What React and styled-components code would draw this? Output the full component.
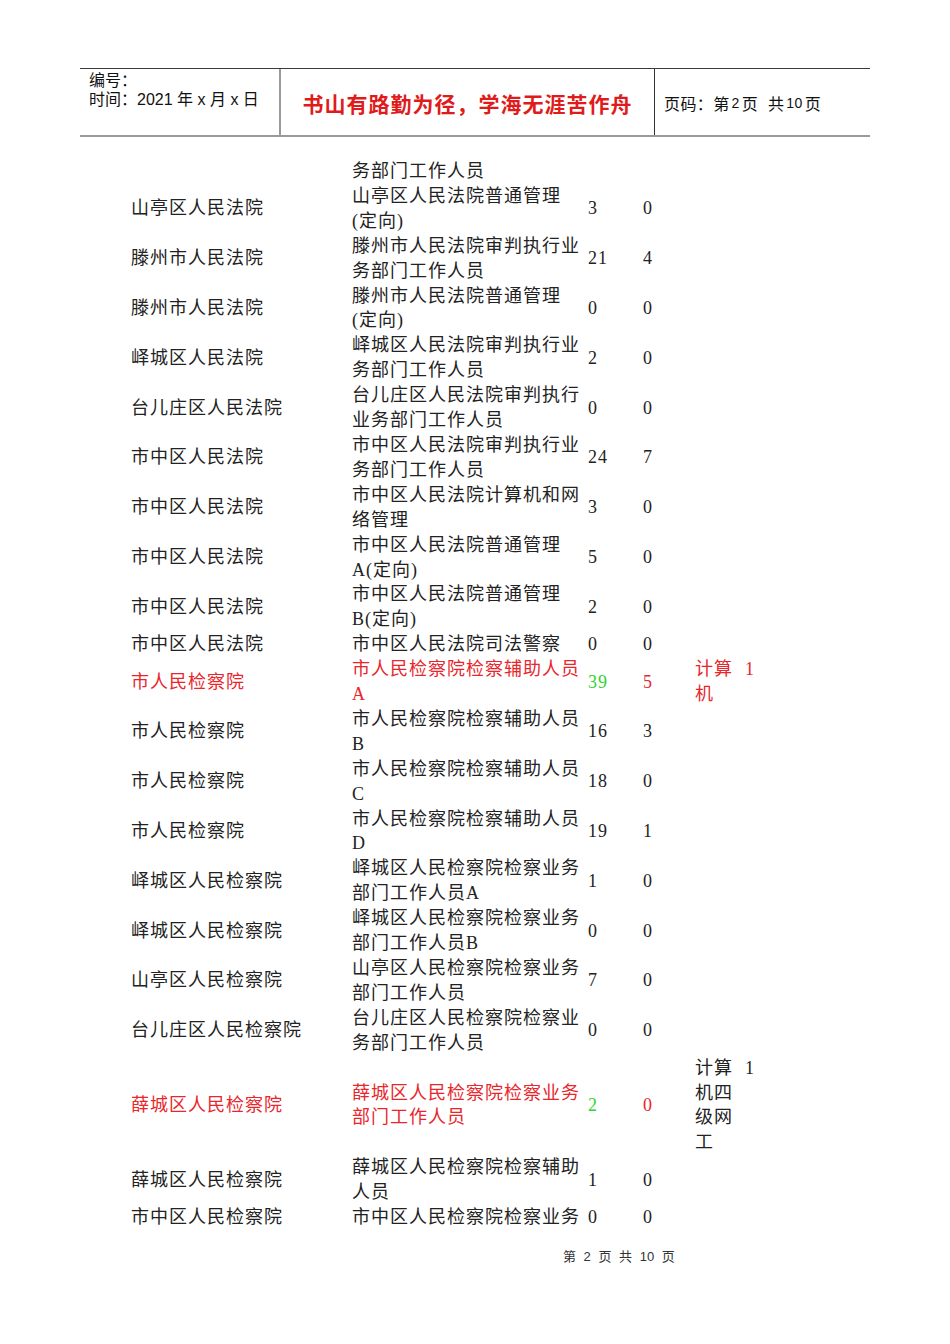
import React from "react";
import styled, { createGlobalStyle } from "styled-components";

const Global = createGlobalStyle`
  html, body { margin: 0; padding: 0; background: #fff; }
  body { width: 950px; min-height: 1344px; }
`;

const Page = styled.div`
  width: 790px;
  margin-left: 80px;
  padding-top: 68px;
  font-family: "Liberation Serif", "Noto Sans CJK SC", serif;
  color: #222;
`;

const Header = styled.div`
  display: grid;
  grid-template-columns: 201px 374px 1fr;
  height: 66px;
  border-top: 1px solid #3a3a3a;
  border-bottom: 2px solid #9a9a9a;
  font-family: "Liberation Sans", "Noto Sans CJK SC", sans-serif;
`;

const MetaCell = styled.div`
  padding: 2px 9px 0;
  font-size: 16px;
  line-height: 19px;
  color: #111;
  border-right: 2px solid #9a9a9a;
`;

const TitleCell = styled.div`
  display: flex;
  align-items: center;
  justify-content: center;
  padding-top: 2px;
  border-right: 1px solid #333;
  color: #e01b1b;
  font-family: "Noto Sans CJK SC", sans-serif;
  font-weight: 700;
  font-size: 21px;
  letter-spacing: 1px;
`;

const PageCell = styled.div`
  display: flex;
  align-items: center;
  padding: 2px 9px 0;
  font-size: 16px;
  letter-spacing: 0.4px;
  color: #111;
`;

const Small = styled.span`
  font-size: 14px;
  margin: 0 2px;
`;

const Table = styled.div`
  margin-top: 22px;
  padding-left: 51px;
`;

const Row = styled.div`
  display: grid;
  grid-template-columns: 221px 236px 55px 52px 50px auto;
  align-items: center;
  font-size: 18px;
  line-height: 24.9px;
  letter-spacing: 1px;
  color: ${p => (p.$red ? "#e8262c" : "#222")};
`;

const Cell = styled.div`
  padding-right: ${p => p.$pr || 0}px;
  align-self: ${p => (p.$top ? "start" : "center")};
  color: ${p => (p.$tone === "green" ? "#2fd42f" : p.$tone === "black" ? "#222" : "inherit")};
`;

const Footer = styled.div`
  margin-top: 16px;
  padding-left: 483px;
  font-size: 13px;
  color: #333;
  word-spacing: 4px;
  font-family: "Liberation Sans", "Noto Sans CJK SC", sans-serif;
`;

const rows = [
  ["", "务部门工作人员", "", ""],
  ["山亭区人民法院", "山亭区人民法院普通管理(定向)", "3", "0"],
  ["滕州市人民法院", "滕州市人民法院审判执行业务部门工作人员", "21", "4"],
  ["滕州市人民法院", "滕州市人民法院普通管理(定向)", "0", "0"],
  ["峄城区人民法院", "峄城区人民法院审判执行业务部门工作人员", "2", "0"],
  ["台儿庄区人民法院", "台儿庄区人民法院审判执行业务部门工作人员", "0", "0"],
  ["市中区人民法院", "市中区人民法院审判执行业务部门工作人员", "24", "7"],
  ["市中区人民法院", "市中区人民法院计算机和网络管理", "3", "0"],
  ["市中区人民法院", "市中区人民法院普通管理A(定向)", "5", "0"],
  ["市中区人民法院", "市中区人民法院普通管理B(定向)", "2", "0"],
  ["市中区人民法院", "市中区人民法院司法警察", "0", "0"],
  ["市人民检察院", "市人民检察院检察辅助人员A", "39", "5", "计算机", "1", { red: true, redNote: true }],
  ["市人民检察院", "市人民检察院检察辅助人员B", "16", "3"],
  ["市人民检察院", "市人民检察院检察辅助人员C", "18", "0"],
  ["市人民检察院", "市人民检察院检察辅助人员D", "19", "1"],
  ["峄城区人民检察院", "峄城区人民检察院检察业务部门工作人员A", "1", "0"],
  ["峄城区人民检察院", "峄城区人民检察院检察业务部门工作人员B", "0", "0"],
  ["山亭区人民检察院", "山亭区人民检察院检察业务部门工作人员", "7", "0"],
  ["台儿庄区人民检察院", "台儿庄区人民检察院检察业务部门工作人员", "0", "0"],
  ["薛城区人民检察院", "薛城区人民检察院检察业务部门工作人员", "2", "0", "计算机四级网工", "1", { red: true, redNote: false }],
  ["薛城区人民检察院", "薛城区人民检察院检察辅助人员", "1", "0"],
  ["市中区人民检察院", "市中区人民检察院检察业务", "0", "0"],
];

export default function App() {
  return (
    <>
      <Global />
      <Page>
        <Header>
          <MetaCell>
            <div>编号：</div>
            <div>时间：2021 年 x 月 x 日</div>
          </MetaCell>
          <TitleCell>书山有路勤为径，学海无涯苦作舟</TitleCell>
          <PageCell>
            页码：第<Small>2</Small>页&nbsp;&nbsp;共<Small>10</Small>页
          </PageCell>
        </Header>
        <Table>
          {rows.map((r, i) => {
            const opt = r[6] || {};
            const note = opt.red && !opt.redNote ? "black" : undefined;
            return (
              <Row key={i} $red={opt.red}>
                <Cell>{r[0]}</Cell>
                <Cell $pr={6}>{r[1]}</Cell>
                <Cell $tone={opt.red ? "green" : undefined}>{r[2]}</Cell>
                <Cell>{r[3]}</Cell>
                <Cell $pr={10} $tone={note}>{r[4] || ""}</Cell>
                <Cell $top $tone={note}>{r[5] || ""}</Cell>
              </Row>
            );
          })}
        </Table>
        <Footer>第 2 页 共 10 页</Footer>
      </Page>
    </>
  );
}
